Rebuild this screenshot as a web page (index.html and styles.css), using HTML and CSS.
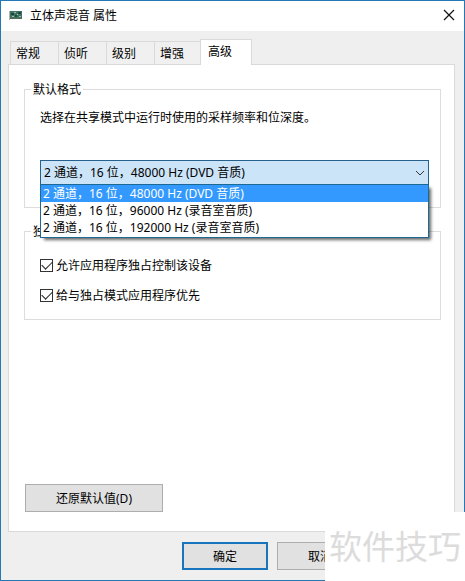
FILE: index.html
```
<!DOCTYPE html>
<html lang="zh-CN">
<head>
  <meta charset="UTF-8" />
  <meta name="viewport" content="width=device-width, initial-scale=1.0"/>
  <title>立体声混音 属性</title>
  <link rel="stylesheet" href="styles.css">
</head>
<body>
  <div class="window">
    <header class="titlebar">
      <svg class="device-icon" width="14" height="10" viewBox="0 0 14 10" aria-hidden="true">
        <rect x="0" y="1" width="13" height="8" fill="#3f7464"/>
        <path d="M0 1h1v9h-1z" fill="#a9b5ae"/>
        <path d="M2 3h3v2h-3zM6 5h2v2h-2zM9 2h3v2h-3z" fill="#24483f"/>
        <path d="M5 2h2v1h-2zM3 6h2v1h-2zM8 4h1v1h-1zM10 6h2v1h-2z" fill="#a5bfae"/>
        <path d="M2 8h10v1h-10z" fill="#5c6c4f"/>
      </svg>
      <h1>立体声混音 属性</h1>
      <button class="close" type="button" aria-label="关闭">
        <svg width="12" height="12" viewBox="0 0 12 12"><path d="M1 1l10 10M11 1l-10 10" stroke="#111" stroke-width="1.2" fill="none"/></svg>
      </button>
    </header>

    <main class="content">
      <nav class="tabs" role="tablist">
        <button class="tab" role="tab" type="button">常规</button>
        <button class="tab" role="tab" type="button">侦听</button>
        <button class="tab" role="tab" type="button">级别</button>
        <button class="tab" role="tab" type="button">增强</button>
        <button class="tab active" role="tab" type="button" aria-selected="true">高级</button>
      </nav>

      <section class="panel">
        <fieldset class="group format">
          <legend>默认格式</legend>
          <label for="format">选择在共享模式中运行时使用的采样频率和位深度。</label>
          <div class="combo">
            <select id="format">
              <option>2 通道，16 位，48000 Hz (DVD 音质)</option>
              <option>2 通道，16 位，96000 Hz (录音室音质)</option>
              <option>2 通道，16 位，192000 Hz (录音室音质)</option>
            </select>
            <svg class="arrow" width="10" height="6" viewBox="0 0 10 6"><path d="M1 1l4 4l4-4" stroke="#333" fill="none"/></svg>
            <ul class="options" role="listbox">
              <li class="selected" role="option" aria-selected="true">2 通道，16 位，48000 Hz (DVD 音质)</li>
              <li role="option">2 通道，16 位，96000 Hz (录音室音质)</li>
              <li role="option">2 通道，16 位，192000 Hz (录音室音质)</li>
            </ul>
          </div>
        </fieldset>

        <fieldset class="group exclusive">
          <legend>独占模式</legend>
          <label class="check"><input type="checkbox" checked>允许应用程序独占控制该设备</label>
          <label class="check"><input type="checkbox" checked>给与独占模式应用程序优先</label>
        </fieldset>

        <button class="btn restore" type="button">还原默认值(D)</button>
      </section>
    </main>

    <footer class="actions">
      <button class="btn primary" type="button">确定</button>
      <button class="btn" type="button">取消</button>
    </footer>
  </div>

  <div class="watermark">软件技巧</div>
</body>
</html>
```

FILE: styles.css
```
* {
  box-sizing: border-box;
}
body {
  margin: 0;
  position: relative;
  font-family: "Noto Sans", "Noto Sans CJK SC", sans-serif;
  font-size: 12px;
  line-height: 17px;
  color: #000;
}
button, select, input {
  font: inherit;
  color: inherit;
  margin: 0;
}
.window {
  display: flex;
  flex-direction: column;
  min-height: 100vh;
  background-color: #efefef;
  border: 1px solid #2478b5;
}
.titlebar {
  display: flex;
  align-items: center;
  height: 30px;
  padding: 0 9px 2px 8px;
  background-color: #fff;
}
.titlebar h1 {
  flex: 1;
  margin: 0 0 0 7px;
  font-size: 12px;
  font-weight: normal;
}
.close {
  display: flex;
  padding: 0;
  border: none;
  background: none;
}
.content {
  flex: 1;
  display: flex;
  flex-direction: column;
  padding: 8px 9px 0 7px;
}
.tabs {
  display: flex;
  align-items: flex-end;
  padding-left: 2px;
}
.tab {
  width: 48px;
  height: 23px;
  padding: 0 5px;
  border: 1px solid #d9d9d9;
  border-width: 1px 0 0 1px;
  background-color: #f0f0f0;
  text-align: left;
}
.tab.active {
  width: 52px;
  height: 26px;
  margin: 0 0 -1px -2px;
  padding: 0 7px 3px;
  border-right-width: 1px;
  background-color: #fff;
  z-index: 1;
}
.panel {
  flex: 1;
  display: flex;
  flex-direction: column;
  padding: 16px 13px 19px 15px;
  border: 1px solid #d9d9d9;
  background-color: #fff;
}
.group {
  min-width: 0;
  margin: 0 0 15px;
  padding: 0 11px 0 15px;
  border: 1px solid #dcdcdc;
}
.group legend {
  margin-left: -9px;
  padding: 0 2px;
}
.format {
  height: 127px;
}
.format label {
  display: block;
  margin-top: 11px;
}
.combo {
  position: relative;
  margin-top: 34px;
}
.combo select {
  display: block;
  width: 100%;
  height: 25px;
  padding: 0 3px;
  border: 1px solid #26608c;
  border-radius: 0;
  background-color: #cce4f7;
  appearance: none;
}
.arrow {
  position: absolute;
  top: 10px;
  right: 4px;
}
.options {
  position: absolute;
  top: 24px;
  left: 0;
  right: 0;
  z-index: 2;
  margin: 0;
  padding: 0 0 1px;
  border: 1px solid #1c6a94;
  background-color: #fff;
  box-shadow: 3px 3px 3px -1px rgba(0, 0, 0, 0.6);
  list-style: none;
}
.options li {
  padding: 0 2px;
}
.options .selected {
  background-color: #3399ff;
  color: #fff;
}
.exclusive {
  height: 97px;
}
.check {
  display: flex;
  align-items: center;
  gap: 3px;
  margin-top: 17px;
}
.check + .check {
  margin-top: 13px;
}
.check input {
  display: grid;
  place-items: center;
  width: 13px;
  height: 13px;
  border: 1px solid #333;
  background-color: #fff;
  appearance: none;
}
.check input:checked::before {
  content: "";
  width: 9px;
  height: 5px;
  margin-bottom: 3px;
  border: solid #222;
  border-width: 0 0 1px 1px;
  transform: rotate(-45deg);
}
.btn {
  width: 86px;
  height: 28px;
  padding: 0;
  border: 1px solid #adadad;
  background-color: #e1e1e1;
}
.primary {
  border: 2px solid #1874bc;
}
.restore {
  width: 138px;
  margin: auto 0 0 1px;
}
.actions {
  display: flex;
  justify-content: flex-end;
  gap: 9px;
  padding: 10px 101px 10px 0;
}
.watermark {
  position: absolute;
  right: 0;
  bottom: 0;
  padding: 0 4px;
  background-color: #fff;
  color: #dcdcdc;
  font-size: 33px;
  line-height: 69px;
}
```
